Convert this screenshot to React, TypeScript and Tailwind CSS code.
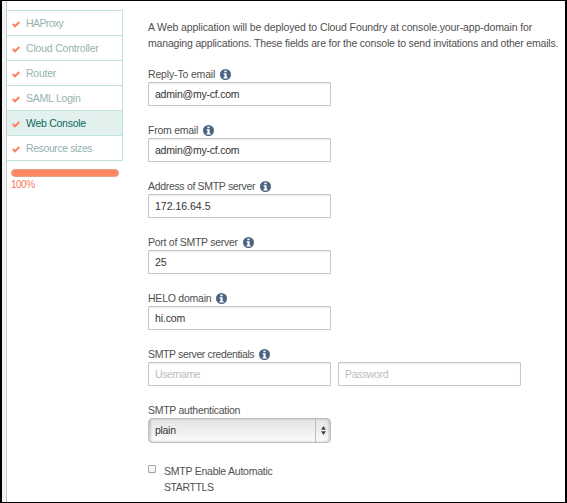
import React from "react";

const steps = [
  { label: "HAProxy", spacing: "tracking-[-0.6px]" },
  { label: "Cloud Controller", spacing: "tracking-[-0.2px]" },
  { label: "Router", spacing: "tracking-[-0.25px]" },
  { label: "SAML Login", spacing: "tracking-[-0.23px]" },
  { label: "Web Console", spacing: "tracking-[-0.27px]", active: true },
  { label: "Resource sizes", spacing: "tracking-[-0.4px]" },
];

const fields = [
  { label: "Reply-To email", spacing: "tracking-[-0.16px]", value: "admin@my-cf.com", valueSpacing: "tracking-[-0.22px]" },
  { label: "From email", spacing: "tracking-[-0.25px]", value: "admin@my-cf.com", valueSpacing: "tracking-[-0.22px]" },
  { label: "Address of SMTP server", spacing: "tracking-[-0.32px]", value: "172.16.64.5", valueSpacing: "tracking-[0px]" },
  { label: "Port of SMTP server", spacing: "tracking-[-0.27px]", value: "25", valueSpacing: "tracking-[0px]" },
  { label: "HELO domain", spacing: "tracking-[-0.23px]", value: "hi.com", valueSpacing: "tracking-[-0.15px]" },
];

function Check() {
  return (
    <svg className="h-[7px] w-2 shrink-0" viewBox="0 0 8 7">
      <path d="M0 3.7 1.4 2.3 3 3.8 6.6.3 8 1.7 3 6.7Z" fill="#fa8361" />
    </svg>
  );
}

function Info() {
  return (
    <svg className="mb-[2px] h-[11px] w-[11px] shrink-0" viewBox="0 0 11 11">
      <circle cx="5.5" cy="5.5" r="5.5" fill="#4a6283" />
      <path d="M4.4 1.5h2.2v1.8H4.4zM3.6 4.2h3v3.9h.9v1.3H3.6V8.1h.9V5.5h-.9z" fill="#fff" />
    </svg>
  );
}

function Label({ text, spacing, info = true }: { text: string; spacing: string; info?: boolean }) {
  return (
    <div className="flex h-[14px] items-center gap-[5px] whitespace-nowrap">
      <span className={spacing}>{text}</span>
      {info && <Info />}
    </div>
  );
}

function Input({ value, placeholder, spacing }: { value?: string; placeholder?: string; spacing: string }) {
  return (
    <input
      className={
        "block h-6 w-[183px] rounded-[1px] border border-[#c6c6c6] bg-white px-1.5 text-[10.5px] text-[#333] shadow-[inset_0_1px_1px_rgba(0,0,0,0.08)] outline-none placeholder:text-[#bdbdbd] " +
        spacing
      }
      defaultValue={value}
      placeholder={placeholder}
    />
  );
}

export default function App() {
  return (
    <div className="flex h-[503px] w-[567px] overflow-hidden border-x-2 border-y border-black bg-white font-['Liberation_Sans',Arial,sans-serif] text-[10.5px] text-[#505050]">
      <div className="w-[5px] shrink-0 border-r border-[#c9c9c9] bg-[#f2f2f2]" />
      <aside className="w-[116px] shrink-0 pt-[9px]">
        <nav className="border-t border-r border-[#bfe3de]">
          {steps.map((s) => (
            <div
              key={s.label}
              className={
                "flex h-[25px] items-center gap-[6px] border-b border-[#bfe3de] pt-[2px] pl-[5px] " +
                (s.active ? "bg-[#e2f0ee] text-[#0c6b62]" : "text-[#93b3af]")
              }
            >
              <Check />
              <span className={"whitespace-nowrap " + s.spacing}>{s.label}</span>
            </div>
          ))}
        </nav>
        <div className="mt-2 ml-1 h-2 w-[108px] rounded-full border border-[#e3a18c] bg-[#fc8763]" />
        <div className="mt-[2px] ml-1 text-[10px] leading-[12px] tracking-[-0.5px] text-[#f5795a]">100%</div>
      </aside>
      <main className="ml-[25px] pt-[18px]">
        <p className="whitespace-nowrap leading-4">
          <span className="tracking-[-0.11px]">A Web application will be deployed to Cloud Foundry at console.your-app-domain for</span>
          <br />
          <span className="tracking-[-0.18px]">managing applications. These fields are for the console to send invitations and other emails.</span>
        </p>
        <div className="mt-[17px] flex flex-col gap-[18px]">
          {fields.map((f) => (
            <div key={f.label}>
              <Label text={f.label} spacing={f.spacing} />
              <Input value={f.value} spacing={f.valueSpacing} />
            </div>
          ))}
          <div>
            <Label text="SMTP server credentials" spacing="tracking-[-0.37px]" />
            <div className="flex gap-[7px]">
              <Input placeholder="Username" spacing="tracking-[-0.4px]" />
              <Input placeholder="Password" spacing="tracking-[-0.37px]" />
            </div>
          </div>
          <div>
            <Label text="SMTP authentication" spacing="tracking-[-0.27px]" info={false} />
            <div className="flex h-[25px] w-[183px] items-center rounded-[4px] border border-[#bdbdbd] bg-linear-to-b from-[#e4e4e4] to-[#fbfbfb] pl-1.5 text-[#333] shadow-[inset_2px_0_2px_rgba(0,0,0,0.15),inset_-2px_0_2px_rgba(0,0,0,0.12)]">
              <span className="tracking-[-0.3px]">plain</span>
              <div className="ml-auto flex h-full w-[15px] items-center justify-center border-l border-[#bdbdbd]">
                <svg className="h-[9px] w-[5px]" viewBox="0 0 5 9">
                  <path d="M2.5 0 5 3.7H0zM0 5.3h5L2.5 9z" fill="#444" />
                </svg>
              </div>
            </div>
          </div>
        </div>
        <label className="mt-5 flex items-start gap-2">
          <span className="mt-[2px] h-2 w-2 shrink-0 rounded-[1px] border border-[#a5a5a5] bg-linear-to-b from-white to-[#eee]" />
          <span className="leading-4">
            <span className="tracking-[-0.24px]">SMTP Enable Automatic</span>
            <br />
            <span className="tracking-[-0.4px]">STARTTLS</span>
          </span>
        </label>
      </main>
    </div>
  );
}
